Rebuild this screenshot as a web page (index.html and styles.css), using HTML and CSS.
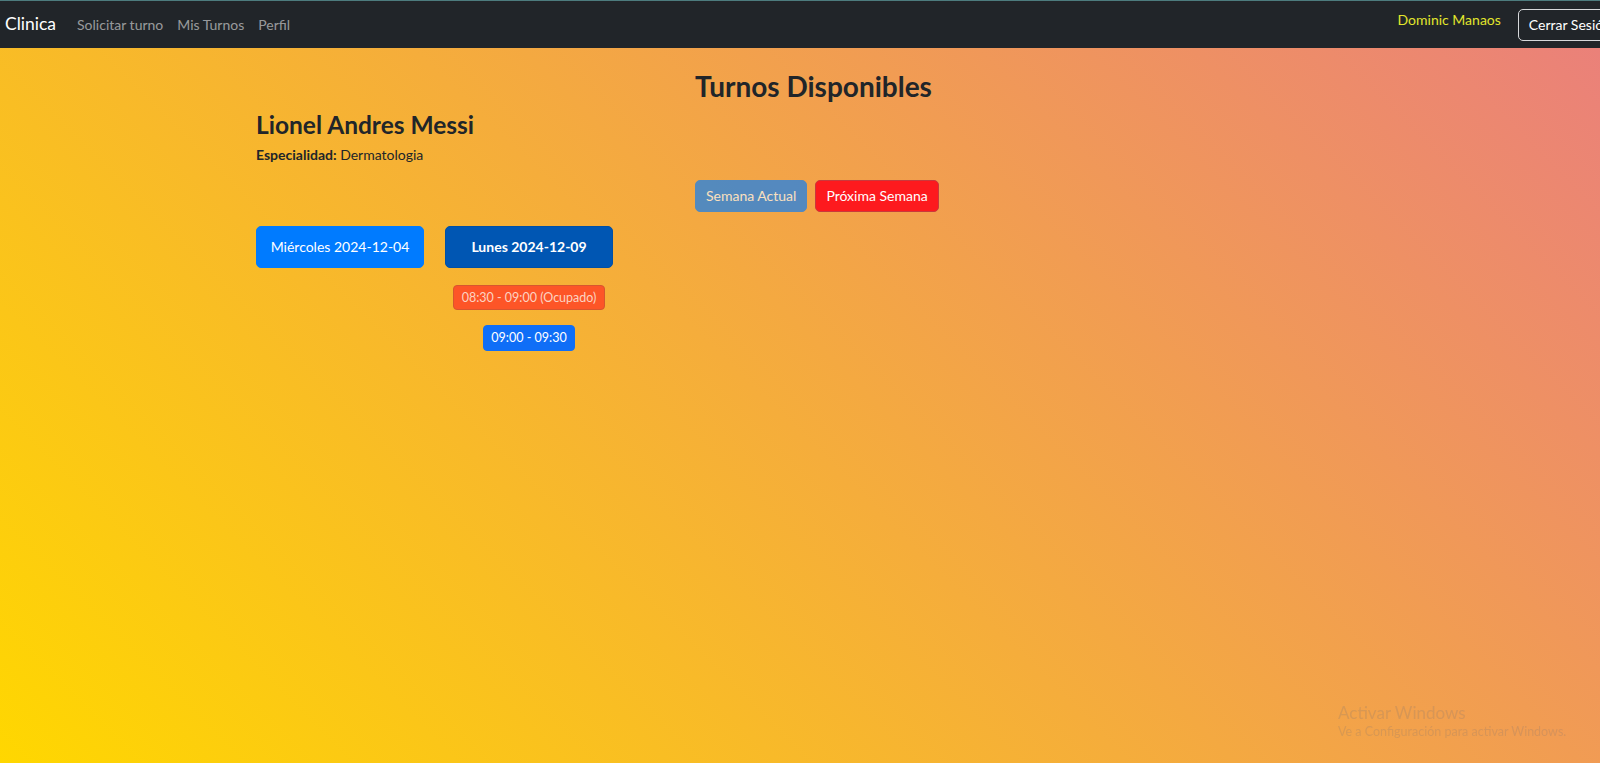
FILE: index.html
```html
<!DOCTYPE html>
<html lang="es">
<head>
<meta charset="utf-8">
<title>Clinica - Turnos Disponibles</title>
<link rel="stylesheet" href="styles.css">
</head>
<body>
<nav class="navbar">
  <a class="brand" href="#">Clinica</a>
  <ul class="nav-links">
    <li><a href="#">Solicitar turno</a></li>
    <li><a href="#">Mis Turnos</a></li>
    <li><a href="#">Perfil</a></li>
  </ul>
  <div class="nav-right">
    <span class="user-name">Dominic Manaos</span>
    <button class="btn-logout">Cerrar Sesión</button>
  </div>
</nav>

<main class="page">
  <div class="title-row">
    <div></div>
    <h2 class="title">Turnos Disponibles</h2>
  </div>

  <h3 class="doctor">Lionel Andres Messi</h3>
  <p class="specialty"><strong>Especialidad:</strong> Dermatologia</p>

  <div class="week-row">
    <div></div>
    <div class="week-nav">
      <button class="btn btn-week-current">Semana Actual</button>
      <button class="btn btn-week-next">Próxima Semana</button>
    </div>
  </div>

  <div class="days">
    <div class="day">
      <button class="btn btn-day">Miércoles 2024-12-04</button>
    </div>
    <div class="day">
      <button class="btn btn-day active">Lunes 2024-12-09</button>
      <button class="slot slot-busy">08:30 - 09:00 (Ocupado)</button>
      <button class="slot slot-free">09:00 - 09:30</button>
    </div>
  </div>
</main>

<div class="watermark">
  <div class="wm-title">Activar Windows</div>
  <div class="wm-sub">Ve a Configuración para activar Windows.</div>
</div>
</body>
</html>
```

FILE: styles.css
```css
* { box-sizing: border-box; }

html, body {
  margin: 0;
  padding: 0;
  height: 100%;
}

body {
  font-family: "Segoe UI", Lato, "Open Sans", sans-serif;
  font-size: 14px;
  line-height: 1.5;
  color: #212529;
  background: linear-gradient(45deg, #ffd700 0%, #ea7f7c 100%);
  background-attachment: fixed;
  min-height: 763px;
  overflow: hidden;
}

/* Navbar */
.navbar {
  height: 48px;
  background: #212529;
  border-top: 1px solid #4d7c7e;
  display: flex;
  align-items: center;
  padding: 0 0 0 5px;
}

.brand {
  color: #fff;
  font-size: 17.5px;
  text-decoration: none;
  margin-right: 14px;
}

.nav-links {
  list-style: none;
  margin: 0;
  padding: 0;
  display: flex;
}

.nav-links a {
  display: block;
  color: rgba(255, 255, 255, 0.55);
  text-decoration: none;
  font-size: 14px;
  padding: 7px;
}

.nav-right {
  margin-left: auto;
  display: flex;
  align-items: center;
  margin-right: -22px;
}

.user-name {
  color: #e2e52c;
  font-size: 14px;
  margin-right: 17px;
  position: relative;
  top: -5px;
}

.btn-logout {
  font-family: inherit;
  font-size: 14px;
  color: #fff;
  background: transparent;
  border: 1px solid #d6d8da;
  border-radius: 5px;
  height: 32px;
  padding: 0 10px;
  white-space: nowrap;
}

/* Page */
.page {
  margin-left: 256px;
  width: 878px;
  padding-top: 22px;
}

.title-row,
.week-row {
  display: grid;
  grid-template-columns: 439px 1fr;
}

.title {
  margin: 0 0 6px;
  font-size: 28px;
  font-weight: 700;
  line-height: 1.2;
}

.doctor {
  margin: 0 0 5px;
  font-size: 24.5px;
  font-weight: 700;
  line-height: 1.2;
}

.specialty {
  margin: 0 0 15px;
  font-size: 14px;
}

.specialty strong { font-weight: 700; }

.btn {
  font-family: inherit;
  font-size: 14px;
  line-height: 20px;
  border-radius: 5px;
  cursor: pointer;
  white-space: nowrap;
}

.week-nav {
  display: flex;
  gap: 8px;
}

.btn-week-current {
  height: 32px;
  padding: 0 10px;
  color: #fff;
  background: #007bff;
  border: 1px solid #007bff;
  opacity: 0.65;
}

.btn-week-next {
  height: 32px;
  padding: 0 10px;
  color: #fff;
  background: #fd1a1e;
  border: 1px solid #c9393c;
}

.days {
  display: flex;
  gap: 21px;
  margin-top: 14px;
}

.day {
  width: 168px;
  display: flex;
  flex-direction: column;
  align-items: center;
}

.btn-day {
  width: 168px;
  height: 42px;
  color: #fff;
  background: #007bff;
  border: 1px solid #007bff;
}

.btn-day.active {
  background: #0056b3;
  border-color: #0050a6;
  font-weight: 700;
}

.slot {
  font-family: inherit;
  font-size: 12.5px;
  line-height: 18px;
  border-radius: 4px;
  padding: 3px 8px;
  white-space: nowrap;
}

.slot-busy {
  margin-top: 17px;
  height: 25px;
  color: #fcd3c2;
  background: #fd5527;
  border: 1px solid #d8562e;
}

.slot-free {
  margin-top: 15px;
  height: 26px;
  color: #fff;
  background: #0f6ef7;
  border: 1px solid #0f6ef7;
  padding: 3px 7px;
}

/* Windows activation overlay */
.watermark {
  position: fixed;
  left: 1338px;
  top: 702px;
  color: rgba(110, 110, 120, 0.2);
  line-height: 1.3;
}

.wm-title { font-size: 17px; }
.wm-sub { font-size: 12.5px; }
```
